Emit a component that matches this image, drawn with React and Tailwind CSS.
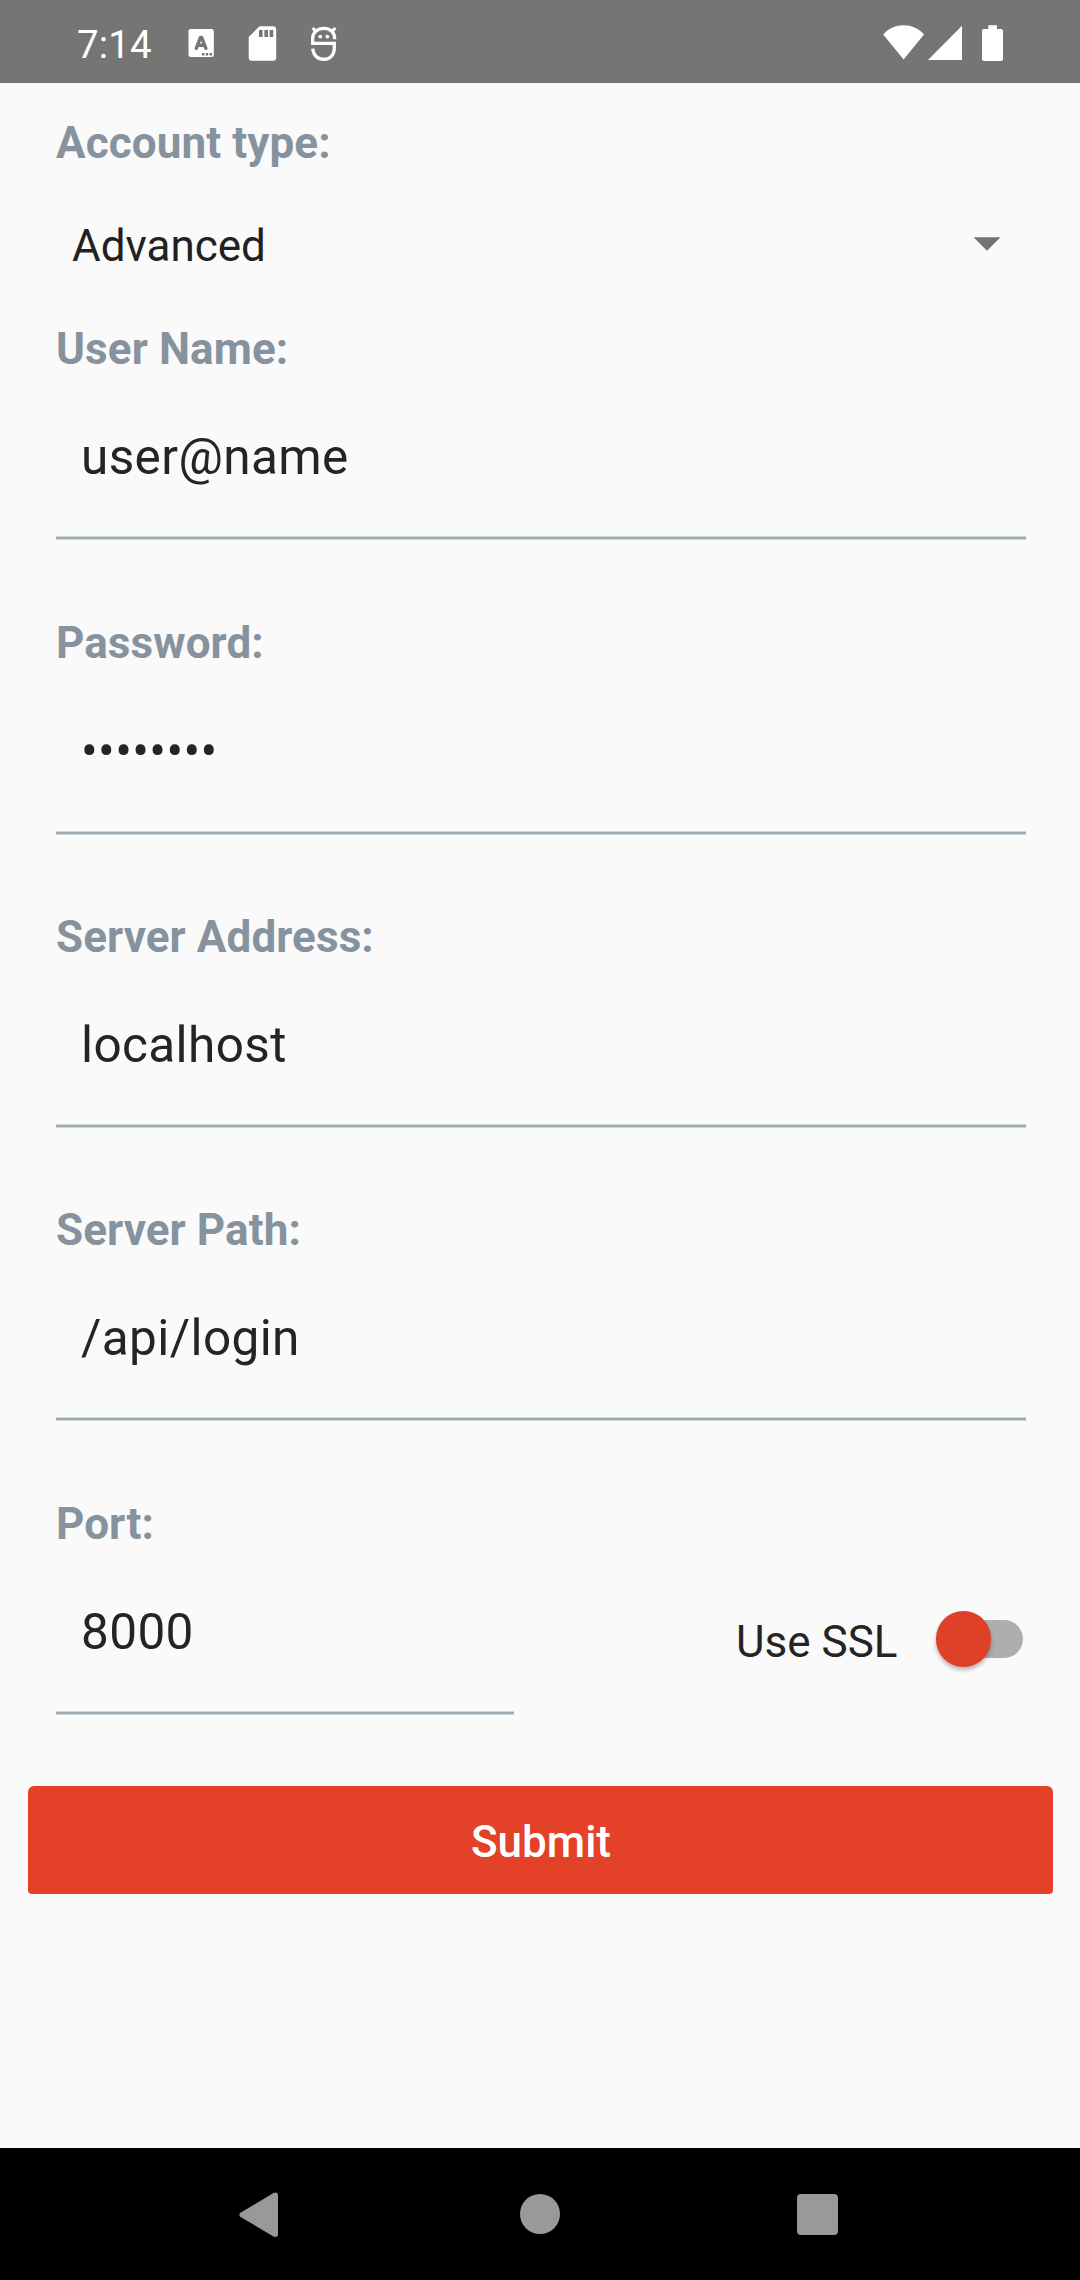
function StatusBar() {
  return (
    <header className="flex h-[83px] shrink-0 items-start bg-[#757575] pl-[77px] text-white">
      <span className="mt-[22px] w-[111px] text-[38.5px] leading-[45px] tracking-[0.15px]">7:14</span>
      <svg className="mt-[29px] h-[28px] w-[26px]" viewBox="0 0 26 28" fill="none">
        <rect x="0.5" y="0" width="25.3" height="28" rx="2.2" fill="#fff" />
        <path d="M8.300 19.300 12.400 8.500h1.200L17.900 19.300M9.800 16.200h6.600" stroke="#757575" strokeWidth="3.400" strokeLinecap="round" strokeLinejoin="round" />
        <path d="M14 24h2.4v2.4H14zM17.800 24h2.400v2.400h-2.400zM21.600 24h2.400v2.400h-2.400z" fill="#757575" />
      </svg>
      <svg className="mt-[26px] ml-[34px] h-[35px] w-[29px]" viewBox="0 0 29 35">
        <path d="M11.5 0.3H25a3.2 3.2 0 0 1 3.2 3.2V31.500a3.200 3.200 0 0 1-3.200 3.200H3.900a3.200 3.200 0 0 1-3.200-3.200V11z" fill="#fff" />
        <path d="M11 4h3.600v7H11zM16.400 4H20v7h-3.600zM21.600 4h3.600v7h-3.600z" fill="#757575" />
      </svg>
      <svg className="mt-[26px] ml-[33px] h-[36px] w-[28px]" viewBox="0 0 28 36" fill="none" stroke="#fff" strokeWidth="3.300">
        <path d="M24.600 13.200V12.300C24.600 6 20 2.300 14 2.300S2.700 6 2.700 12.300v5H24.300v4.500c0 7-4 11.500-10.300 11.500S3.300 29.500 2.800 22.700" />
        <path d="M2.700 2l3.400 3.600M25.300 2l-3.400 3.600" strokeWidth="3.200" />
        <circle cx="10.300" cy="10.600" r="1.900" fill="#fff" stroke="none" />
        <circle cx="17.300" cy="10.600" r="1.900" fill="#fff" stroke="none" />
      </svg>
      <svg className="mt-[25px] ml-[545px] h-[37px] w-[122px]" viewBox="0 0 122 37" fill="#fff">
        <path d="M0.200 9.400C6 3.300 13 0.300 20.600 0.300S35.200 3.300 41 9.400L20.600 34.500z" />
        <path d="M45 35 79 0.700V35z" />
        <path d="M105.300 0.300h8.700V4h4a2 2 0 0 1 2 2v28a2 2 0 0 1-2 2h-17a2 2 0 0 1-2-2V6a2 2 0 0 1 2-2h4.300z" />
      </svg>
    </header>
  );
}

function Label({ children }) {
  return <div className="text-[44px] leading-[52px] font-bold tracking-[0.1px] text-[#86939e]">{children}</div>;
}

function Underline() {
  return <div className="h-[4px] border-y border-[#d0d7db] bg-[#9ca9b2]" />;
}

function Field({ label, value, className = "h-[294px]", gap = "h-[50px]" }) {
  return (
    <div className={className}>
      <Label>{label}</Label>
      <div className="mt-[53px] pl-[25px] text-[49.5px] leading-[58px] tracking-[0.38px] text-[#242424]">{value}</div>
      <div className={gap} />
      <Underline />
    </div>
  );
}

function Toggle() {
  return (
    <div className="relative mt-[113px] ml-[37.5px] h-[56px] w-[88px]">
      <div className="absolute top-[9px] left-[6px] h-[38px] w-[82px] rounded-full bg-[#aeaeae]" />
      <div className="absolute top-[0.3px] left-[0.6px] size-[55.5px] rounded-full bg-[#df4128] shadow-[0_3px_4px_rgba(0,0,0,0.28)]" />
    </div>
  );
}

function NavBar() {
  return (
    <nav className="flex h-[132px] shrink-0 items-start bg-black pt-[44px] pl-[239px]">
      <svg className="h-[46px] w-[40px]" viewBox="0 0 40 46" fill="#999">
        <path d="M1.500 20.800 34.500 1Q38.800-0.800 39 3.500V42Q38.800 46.200 34.500 44.500L1.500 24.900Q-0.800 22.900 1.500 20.800z" />
      </svg>
      <div className="mt-[2px] ml-[241px] size-[40px] rounded-full bg-[#999]" />
      <div className="mt-[2px] ml-[237px] size-[41px] rounded-[4px] bg-[#999]" />
    </nav>
  );
}

export default function App() {
  return (
    <div className="flex h-[2280px] w-[1080px] flex-col bg-[#fafafa] font-[Roboto,sans-serif]">
      <StatusBar />
      <main className="flex-1 pt-[34px]">
        <div className="pr-[54px] pl-[56px]">
          <Label>Account type:</Label>
          <div className="mt-[51px] mb-[51px] flex items-start justify-between pr-[25px] pl-[16px]">
            <span className="text-[44px] leading-[52px] text-[#212121]">Advanced</span>
            <svg className="mt-[17px] h-[14px] w-[28px]" viewBox="0 0 28 14">
              <path d="M0.500 0.300h27L14 13.800z" fill="#737373" />
            </svg>
          </div>
          <Field label="User Name:" value="user@name" />
          <Field label="Password:" value="••••••••" gap="h-[51px]" />
          <Field label="Server Address:" value="localhost" className="h-[293px]" />
          <Field label="Server Path:" value="/api/login" />
          <div className="flex">
            <Field label="Port:" value="8000" className="h-[288px] w-[458px]" />
            <div className="flex flex-1 items-start justify-end pr-[3px]">
              <span className="mt-[118px] text-[44px] leading-[52px] text-[#242424]">Use SSL</span>
              <Toggle />
            </div>
          </div>
        </div>
        <button className="ml-[28px] flex h-[108px] w-[1025px] items-center justify-center rounded-t-[6px] rounded-b-[4px] bg-[#e44228] pt-[4px] pl-px text-[44px] leading-[52px] font-medium text-white">
          Submit
        </button>
      </main>
      <NavBar />
    </div>
  );
}
